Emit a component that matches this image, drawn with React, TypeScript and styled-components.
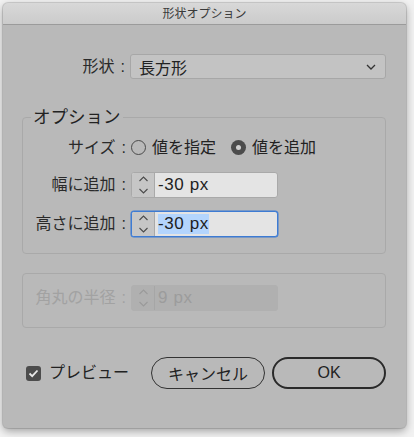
import React from "react";
import styled, { createGlobalStyle } from "styled-components";

const Global = createGlobalStyle`
  html, body { margin: 0; padding: 0; background: #f2f2f2; }
  body { font-family: "Liberation Sans", "Noto Sans CJK JP", sans-serif; }
  * { box-sizing: border-box; }
`;

const Page = styled.div`
  padding: 3px 8px 9px 3px;
  width: 414px;
  height: 437px;
`;

const Window = styled.div`
  width: 403px;
  height: 425px;
  background: #b9b9b9;
  border-radius: 5px;
  box-shadow: 0 0 0 1px rgba(0, 0, 0, 0.12), 0 3px 8px rgba(0, 0, 0, 0.35);
  display: flex;
  flex-direction: column;
  overflow: hidden;
  color: #222;
`;

const TitleBar = styled.div`
  height: 22px;
  flex: none;
  background: linear-gradient(#d8d8d8, #cbcbcb);
  border-bottom: 1px solid #9b9b9b;
  display: flex;
  align-items: center;
  justify-content: center;
  font-size: 12px;
  color: #3a3a3a;
  line-height: 1;
`;

const Content = styled.div`
  padding: 29px 20px 0 19px;
  display: flex;
  flex-direction: column;
`;

const Row = styled.div<{ $mt?: number }>`
  display: flex;
  align-items: center;
  height: 25px;
  margin-top: ${(p) => p.$mt ?? 0}px;
`;

const Label = styled.div<{ $disabled?: boolean; $w?: number }>`
  width: ${(p) => p.$w ?? 105}px;
  flex: none;
  text-align: right;
  font-size: 16px;
  line-height: 20px;
  padding-right: 2px;
  color: ${(p) => (p.$disabled ? "#a2a2a2" : "#2a2a2a")};
  white-space: nowrap;
`;

const Colon = styled.span`
  margin-left: 6px;
`;

const Select = styled.div`
  flex: 1;
  height: 25px;
  margin-left: 3px;
  background: #c3c3c3;
  border: 1px solid #a7a7a7;
  border-radius: 3px;
  display: flex;
  align-items: center;
  justify-content: space-between;
  padding: 0 9px 0 8px;
  font-size: 16px;
  color: #222;
`;

const Group = styled.fieldset<{ $mt: number; $pt: number; $pb: number }>`
  margin: ${(p) => p.$mt}px 0 0 0;
  padding: ${(p) => p.$pt}px 0 ${(p) => p.$pb}px 0;
  border: 1px solid #a9a9a9;
  border-radius: 4px;
  min-width: 0;
`;

const Legend = styled.legend`
  margin-left: 8px;
  padding: 0 2px;
  font-size: 17.5px;
  line-height: 20px;
  color: #222;
`;

const RadioGroup = styled.div`
  display: flex;
  align-items: center;
  margin-left: 3px;
`;

const RadioItem = styled.label<{ $ml?: number }>`
  display: flex;
  align-items: center;
  gap: 6px;
  margin-left: ${(p) => p.$ml ?? 0}px;
  font-size: 16px;
  line-height: 20px;
  color: #222;
`;

const RadioDot = styled.span<{ $on?: boolean }>`
  width: 15px;
  height: 15px;
  border-radius: 50%;
  flex: none;
  display: flex;
  align-items: center;
  justify-content: center;
  border: ${(p) => (p.$on ? "none" : "1px solid #4a4a4a")};
  background: ${(p) => (p.$on ? "#4c4c4c" : "transparent")};
  &::after {
    content: "";
    display: ${(p) => (p.$on ? "block" : "none")};
    width: 5px;
    height: 5px;
    border-radius: 50%;
    background: #d0d0d0;
  }
`;

const Stepper = styled.div<{ $focus?: boolean; $disabled?: boolean }>`
  width: 147px;
  height: 26px;
  margin-left: 3px;
  display: flex;
  border-radius: 3px;
  overflow: hidden;
  border: 1px solid
    ${(p) => (p.$focus ? "#3d7bd3" : p.$disabled ? "#b0b0b0" : "#a9a9a9")};
  box-shadow: ${(p) => (p.$focus ? "0 0 0 0.5px #3d7bd3" : "none")};
  background: ${(p) => (p.$disabled ? "#b0b0b0" : "#e4e4e4")};
`;

const Arrows = styled.div<{ $disabled?: boolean }>`
  width: 23px;
  flex: none;
  background: ${(p) => (p.$disabled ? "#b0b0b0" : "#c6c6c6")};
  border-right: 1px solid ${(p) => (p.$disabled ? "#a6a6a6" : "#a9a9a9")};
  display: flex;
  align-items: center;
  justify-content: center;
`;

const Value = styled.div<{ $disabled?: boolean }>`
  flex: 1;
  display: flex;
  align-items: center;
  padding-left: 3px;
  font-size: 17px;
  letter-spacing: 0.6px;
  color: ${(p) => (p.$disabled ? "#9c9c9c" : "#1e1e1e")};
`;

const Selected = styled.span`
  background: #b4d5fd;
`;

const Bottom = styled.div`
  margin-top: 29px;
  display: flex;
  align-items: center;
  padding-left: 4px;
`;

const Check = styled.label`
  display: flex;
  align-items: center;
  gap: 8px;
  font-size: 16px;
  line-height: 20px;
  color: #222;
`;

const CheckBox = styled.span`
  width: 15px;
  height: 15px;
  border-radius: 3px;
  background: #4c4c4c;
  display: flex;
  align-items: center;
  justify-content: center;
`;

const Buttons = styled.div`
  margin-left: auto;
  display: flex;
  gap: 7px;
`;

const Button = styled.button<{ $primary?: boolean }>`
  width: 114px;
  height: 32px;
  border-radius: 16px;
  background: transparent;
  border: ${(p) => (p.$primary ? "2px solid #2a2a2a" : "1px solid #333")};
  font-family: inherit;
  font-size: 16px;
  color: #222;
  padding: 0;
`;

const StepArrows = ({ color = "#4a4a4a" }: { color?: string }) => (
  <svg width="11" height="20" viewBox="0 0 11 20" fill="none">
    <path d="M1.5 6 L5.5 2 L9.5 6" stroke={color} strokeWidth="1.1" />
    <path d="M1.5 14 L5.5 18 L9.5 14" stroke={color} strokeWidth="1.1" />
  </svg>
);

export default function App() {
  return (
    <>
      <Global />
      <Page>
        <Window>
          <TitleBar>形状オプション</TitleBar>
          <Content>
            <Row>
              <Label>
                形状<Colon>:</Colon>
              </Label>
              <Select>
                <span>長方形</span>
                <svg width="10" height="6" viewBox="0 0 10 6" fill="none">
                  <path d="M1 1 L5 5 L9 1" stroke="#333" strokeWidth="1.3" />
                </svg>
              </Select>
            </Row>

            <Group $mt={28} $pt={8} $pb={17}>
              <Legend>オプション</Legend>
              <Row>
                <Label>
                  サイズ<Colon>:</Colon>
                </Label>
                <RadioGroup>
                  <RadioItem>
                    <RadioDot />
                    値を指定
                  </RadioItem>
                  <RadioItem $ml={15}>
                    <RadioDot $on />
                    値を追加
                  </RadioItem>
                </RadioGroup>
              </Row>
              <Row $mt={12}>
                <Label>
                  幅に追加<Colon>:</Colon>
                </Label>
                <Stepper>
                  <Arrows>
                    <StepArrows />
                  </Arrows>
                  <Value>-30 px</Value>
                </Stepper>
              </Row>
              <Row $mt={14}>
                <Label>
                  高さに追加<Colon>:</Colon>
                </Label>
                <Stepper $focus>
                  <Arrows>
                    <StepArrows />
                  </Arrows>
                  <Value>
                    <Selected>-30 px</Selected>
                  </Value>
                </Stepper>
              </Row>
            </Group>

            <Group $mt={19} $pt={11} $pb={17}>
              <Row>
                <Label $disabled>
                  角丸の半径<Colon>:</Colon>
                </Label>
                <Stepper $disabled>
                  <Arrows $disabled>
                    <StepArrows color="#9a9a9a" />
                  </Arrows>
                  <Value $disabled>9 px</Value>
                </Stepper>
              </Row>
            </Group>

            <Bottom>
              <Check>
                <CheckBox>
                  <svg width="11" height="9" viewBox="0 0 11 9" fill="none">
                    <path d="M1.5 4.5 L4.2 7.2 L9.5 1.5" stroke="#e8e8e8" strokeWidth="1.8" />
                  </svg>
                </CheckBox>
                プレビュー
              </Check>
              <Buttons>
                <Button>キャンセル</Button>
                <Button $primary>OK</Button>
              </Buttons>
            </Bottom>
          </Content>
        </Window>
      </Page>
    </>
  );
}
